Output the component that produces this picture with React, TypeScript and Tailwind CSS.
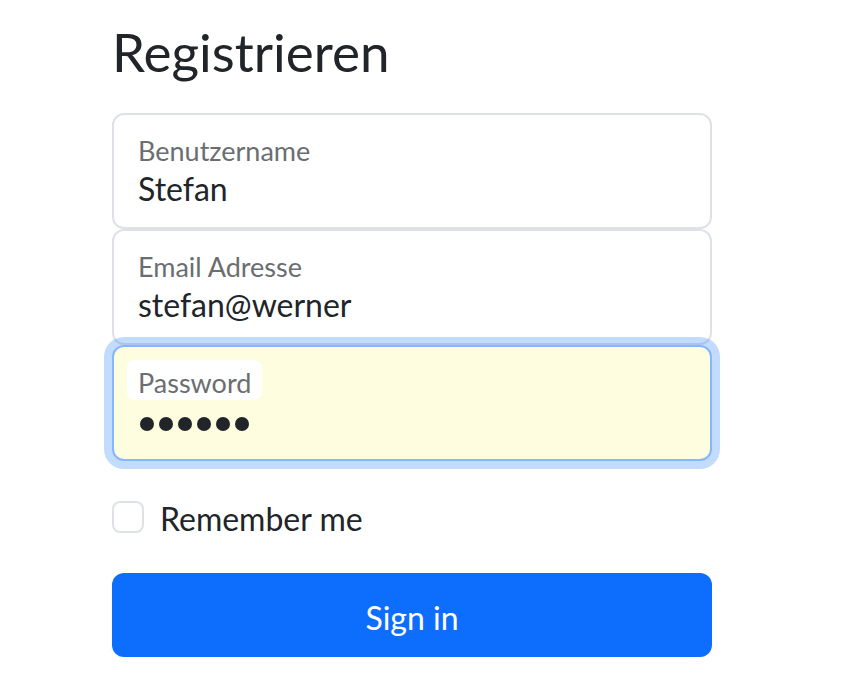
import React from "react";

function Field({ label, value, focused, password }: { label: string; value: string; focused?: boolean; password?: boolean }) {
  return (
    <div
      className={
        focused
          ? "relative z-10 h-[116px] border-2 border-[#86b7fe] rounded-[12px] bg-[#fefddf] pl-[13px] pt-[13px] flex flex-col items-start shadow-[0_0_0_8px_rgba(13,110,253,0.25)]"
          : "h-[116px] border-2 border-[#dee2e6] rounded-[12px] bg-white pl-[13px] pt-[13px] flex flex-col items-start"
      }
    >
      <span className="h-[40px] pt-[3px] text-[27px] leading-[40px] px-[11px] rounded-[8px] bg-white text-[#6b6e71]">{label}</span>
      {password ? (
        <span className="pl-[13px] h-[48px] flex items-center gap-[5px]">
          {value.split("").map((_, i) => (
            <span key={i} className="inline-block w-[14px] h-[14px] rounded-full bg-[#212529]" />
          ))}
        </span>
      ) : (
        <span className="pt-[1px] text-[32px] leading-[40px] pl-[11px] text-[#212529]">{value}</span>
      )}
    </div>
  );
}

export default function App() {
  return (
    <div className="min-h-screen bg-white font-['Lato',sans-serif] text-[#212529]">
      <div className="w-[600px] ml-[112px] pt-[18px]">
        <h1 className="text-[53px] leading-[67px] font-normal mb-[28px]">Registrieren</h1>
        <form className="flex flex-col">
          <Field label="Benutzername" value="Stefan" />
          <Field label="Email Adresse" value="stefan@werner" />
          <Field label="Password" value="secret" focused password />
        </form>
        <div className="flex items-center gap-[16px] my-[32px] h-[48px]">
          <span className="w-[32px] h-[32px] border-2 border-[#dee2e6] rounded-[8px] bg-white" />
          <span className="pt-[3px] text-[32px] leading-[48px]">Remember me</span>
        </div>
        <button className="w-full h-[84px] pt-[5px] rounded-[12px] bg-[#0d6efd] text-white text-[32px] leading-[48px]">
          Sign in
        </button>
      </div>
    </div>
  );
}
